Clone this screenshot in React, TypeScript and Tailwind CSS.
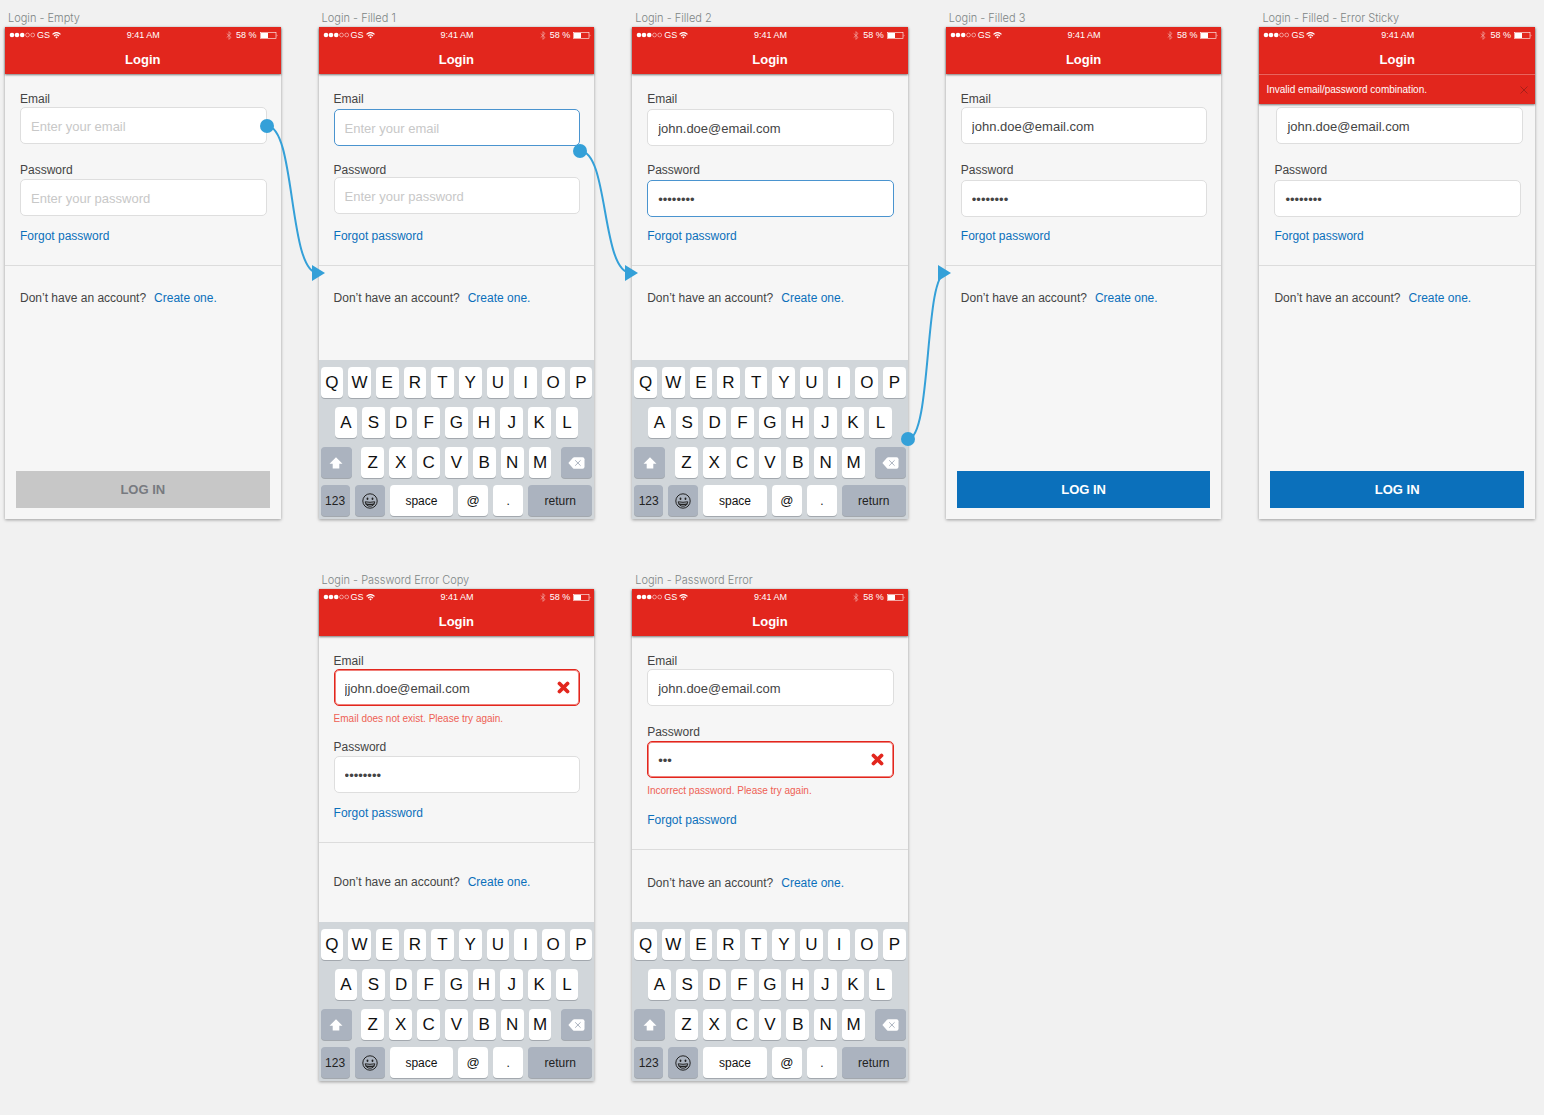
import React, { useId } from "react";

type FieldProps = {
  label: string;
  type: "email" | "password";
  value?: string;
  placeholder?: string;
  state?: "idle" | "focus" | "error";
  error?: string;
  className?: string;
  inputClassName?: string;
};

const borders = {
  idle: "border border-[#dedede]",
  focus: "border border-[#4a94cf]",
  error: "border border-[#e2261d] ring-1 ring-inset ring-[#f0807a]",
};

function Field({ label, type, value, placeholder, state = "idle", error, className = "", inputClassName = "mt-0" }: FieldProps) {
  const id = useId();
  return (
    <div className={`flex flex-col ${className}`}>
      <label htmlFor={id} className="text-[12px] leading-4 text-[#444]">
        {label}
      </label>
      <div className={`relative ${inputClassName}`}>
        <input
          id={id}
          type={type}
          defaultValue={value}
          placeholder={placeholder}
          className={`block h-[37px] w-full rounded-[5px] bg-white px-2.5 pt-0.5 text-[13px] text-[#444] outline-none placeholder:text-[#c8c8c8] ${borders[state]}`}
        />
        {state === "error" && (
          <svg className="absolute right-2.5 top-3 size-[13px]" viewBox="0 0 13 13" aria-hidden="true">
            <path d="M2.5 2.5 L10.5 10.5 M10.5 2.5 L2.5 10.5" stroke="#e2261d" strokeWidth="3.8" strokeLinecap="round" />
          </svg>
        )}
      </div>
      {error && <p className="mt-[5px] text-[10px] leading-4 text-[#ee5f54]">{error}</p>}
    </div>
  );
}

function StatusBar() {
  return (
    <div className="grid h-4 grid-cols-3 items-center pl-1 pr-[3px] text-[9px] leading-none text-white">
      <div className="flex items-center">
        <svg width="27" height="6" viewBox="0 0 27 6" aria-hidden="true">
          <circle cx="3" cy="3" r="2.3" fill="#fff" />
          <circle cx="8" cy="3" r="2.3" fill="#fff" />
          <circle cx="13.2" cy="3" r="2.3" fill="#fff" />
          <circle cx="18.5" cy="3" r="1.9" fill="none" stroke="#fff" strokeWidth=".5" />
          <circle cx="23.7" cy="3" r="1.9" fill="none" stroke="#fff" strokeWidth=".5" />
        </svg>
        <span className="ml-px">GS</span>
        <svg className="ml-0.5" width="9" height="7" viewBox="0 0 9 7" fill="none" stroke="#fff" aria-hidden="true">
          <path d="M.5 2.4 Q4.5 -1.2 8.5 2.4" strokeWidth="1.2" />
          <path d="M2 4.1 Q4.5 1.8 7 4.1" strokeWidth="1.1" />
          <path d="M3.2 5 Q4.5 4 5.8 5 L4.5 6.6 Z" fill="#fff" stroke="none" />
        </svg>
      </div>
      <span className="text-center">9:41 AM</span>
      <div className="flex items-center justify-end">
        <svg className="mr-1" width="6" height="9" viewBox="0 0 6 9" fill="none" stroke="#fff" strokeWidth=".6" opacity=".7" aria-hidden="true">
          <path d="M.7 2.5 L5 6.4 L3 8.4 V.6 L5 2.6 L.7 6.5" />
        </svg>
        <span>58 %</span>
        <svg className="ml-[3px]" width="18" height="7" viewBox="0 0 18 7" aria-hidden="true">
          <rect x=".5" y=".5" width="15.5" height="6" fill="none" stroke="#fff" strokeWidth=".6" />
          <rect x="1" y="1" width="7" height="5" fill="#fff" />
          <path d="M16.8 2.2 q1.2 1.3 0 2.6 Z" fill="#fff" />
        </svg>
      </div>
    </div>
  );
}

const keyBase = "flex items-center justify-center rounded-[4px] shadow-[0_1px_0_#a3a8ae]";
const light = `${keyBase} bg-white text-[#111]`;
const dark = `${keyBase} bg-[#abb3bf] text-[#222]`;

function LetterRow({ letters, className }: { letters: string; className: string }) {
  return (
    <div className={`grid h-[31px] gap-[5px] ${className}`}>
      {letters.split("").map((l) => (
        <button key={l} type="button" className={`${light} text-[17px] leading-none`}>
          {l}
        </button>
      ))}
    </div>
  );
}

function Keyboard() {
  return (
    <div className="mt-auto flex flex-col gap-[9px] bg-[#d1d6da] px-0.5 pb-[3px] pt-[7px]">
      <LetterRow letters="QWERTYUIOP" className="grid-cols-10" />
      <LetterRow letters="ASDFGHJKL" className="grid-cols-9 px-[14px]" />
      <div className="flex flex-col gap-[7px]">
        <div className="flex h-[31px] justify-between">
          <button type="button" aria-label="Shift" className={`${dark} w-[31px]`}>
            <svg width="14" height="12" viewBox="0 0 14 12" aria-hidden="true">
              <path d="M7 .3 L13.5 6.7 H10.3 V11.4 H3.7 V6.7 H.5 Z" fill="#fff" />
            </svg>
          </button>
          <LetterRow letters="ZXCVBNM" className="w-[190px] grid-cols-7" />
          <button type="button" aria-label="Delete" className={`${dark} w-[31px]`}>
            <svg width="17" height="12" viewBox="0 0 17 12" aria-hidden="true">
              <path d="M.4 6 L5 .8 Q5.5 .3 6.3 .3 H14.5 Q16.5 .3 16.5 2.2 V9.8 Q16.5 11.7 14.5 11.7 H6.3 Q5.5 11.7 5 11.2 Z" fill="#fff" />
              <path d="M7.2 3.3 L12.6 8.7 M12.6 3.3 L7.2 8.7" stroke="#abb3bf" strokeWidth="1" />
            </svg>
          </button>
        </div>
        <div className="flex h-[31px] gap-[5px] text-[12px]">
          <button type="button" className={`${dark} w-[29px]`}>123</button>
          <button type="button" aria-label="Emoji" className={`${dark} w-[30px]`}>
            <svg width="16" height="16" viewBox="0 0 16 16" fill="none" stroke="#222" aria-hidden="true">
              <circle cx="8" cy="8" r="7.2" strokeWidth="1" />
              <ellipse cx="5.5" cy="5.8" rx=".9" ry="1.2" fill="#222" stroke="none" />
              <ellipse cx="10.5" cy="5.8" rx=".9" ry="1.2" fill="#222" stroke="none" />
              <path d="M3.2 8.8 Q8 9.8 12.8 8.8 Q12.2 13.2 8 13.2 Q3.800 13.2 3.2 8.8 Z" strokeWidth="1" />
              <path d="M3.8 10.800 Q8 12 12.2 10.8" strokeWidth="1.2" />
            </svg>
          </button>
          <button type="button" className={`${light} flex-1`}>space</button>
          <button type="button" className={`${light} w-[30px] text-[13px]`}>@</button>
          <button type="button" className={`${light} w-[30px]`}>.</button>
          <button type="button" className={`${dark} w-16`}>return</button>
        </div>
      </div>
    </div>
  );
}

function LoginButton({ disabled = false }: { disabled?: boolean }) {
  const tone = disabled ? "bg-[#c7c7c7] text-[#777a80]" : "bg-[#0b70bb] text-white";
  return (
    <div className="mt-auto px-[11px] pb-[11px]">
      <button type="submit" disabled={disabled} className={`h-[37px] w-full text-[13px] font-bold ${tone}`}>
        LOG IN
      </button>
    </div>
  );
}

type Flow = { className: string; height: number; dot: [number, number]; path: string; tip: [number, number] };

function Connector({ className, height, dot, path, tip }: Flow) {
  return (
    <svg
      className={`pointer-events-none absolute z-10 ${className}`}
      width="66"
      height={height}
      viewBox={`0 0 66 ${height}`}
      aria-hidden="true"
    >
      <path d={path} fill="none" stroke="#34a0d8" strokeWidth="2" />
      <circle cx={dot[0]} cy={dot[1]} r="7" fill="#34a0d8" />
      <path d={`M${tip[0] - 13} ${tip[1] - 8} L${tip[0]} ${tip[1]} L${tip[0] - 13} ${tip[1] + 8} Z`} fill="#34a0d8" />
    </svg>
  );
}

type ArtboardProps = {
  title: string;
  className?: string;
  banner?: string;
  email: React.ReactNode;
  password: React.ReactNode;
  forgotClassName: string;
  accountClassName?: string;
  footer: React.ReactNode;
  connector?: Flow;
};

function Artboard({
  title,
  className = "",
  banner,
  email,
  password,
  forgotClassName,
  accountClassName = "pt-6",
  footer,
  connector,
}: ArtboardProps) {
  return (
    <section className={`relative flex flex-col ${className}`}>
      <h2 className="pl-[3px] font-[Inter] text-[11px] font-light leading-[18px] text-[#7d8585]">{title}</h2>
      <form
        onSubmit={(e) => e.preventDefault()}
        className="flex min-h-[492px] flex-1 flex-col bg-[#f6f6f6] shadow-[0_1px_3px_rgba(0,0,0,0.35)]"
      >
        <header className="relative h-[47px] bg-[#e2261d] text-white shadow-[0_1px_2px_rgba(0,0,0,0.5)]">
          <StatusBar />
          <h3 className="text-center text-[13px] font-bold leading-[34px]">Login</h3>
          {banner && (
            <div
              role="alert"
              className="absolute inset-x-0 top-full z-10 flex h-[30px] items-center justify-between border-t border-[#e9645d] bg-[#e2261d] px-[7px] text-[10px] shadow-[0_1px_2px_rgba(0,0,0,0.5)]"
            >
              <span>{banner}</span>
              <button type="button" aria-label="Dismiss">
                <svg width="8" height="8" viewBox="0 0 8 8" stroke="#a81f18" strokeWidth="1" aria-hidden="true">
                  <path d="M.5 .5 L7.5 7.5 M7.5 .5 L.5 7.5" />
                </svg>
              </button>
            </div>
          )}
        </header>
        <div className="pl-[15px] pr-[14px] pt-[17px]">
          {email}
          {password}
        </div>
        <div className={`border-b border-[#dcdcdc] px-[15px] pb-[21px] text-[12px] leading-4 ${forgotClassName}`}>
          <a href="#forgot" className="text-[#0b70bb]">Forgot password</a>
        </div>
        <p className={`flex items-baseline gap-2 px-[15px] text-[12px] leading-4 text-[#444] ${accountClassName}`}>
          <span>Don’t have an account?</span>
          <a href="#create" className="text-[#0b70bb]">Create one.</a>
        </p>
        {footer}
      </form>
      {connector && <Connector {...connector} />}
    </section>
  );
}

export default function App() {
  return (
    <main className="min-h-screen bg-[#f1f1f1] pb-[34px] pl-[5px] pr-[9px] pt-[9px] font-['Liberation_Sans',Arial,sans-serif]">
      <div className="grid grid-cols-5 gap-x-[38px] gap-y-[52px]">
        <Artboard
          title="Login - Empty"
          email={<Field label="Email" type="email" placeholder="Enter your email" />}
          password={<Field label="Password" type="password" placeholder="Enter your password" className="mt-[18px]" inputClassName="mt-px" />}
          forgotClassName="mt-3"
          footer={<LoginButton disabled />}
          connector={{
            className: "left-[calc(100%-21px)] top-[109px]",
            height: 164,
            dot: [7, 8],
            path: "M7 8 C36 8 28 155 58 155",
            tip: [65, 155],
          }}
        />
        <Artboard
          title="Login - Filled 1"
          email={<Field label="Email" type="email" placeholder="Enter your email" state="focus" inputClassName="mt-0.5" />}
          password={<Field label="Password" type="password" placeholder="Enter your password" className="mt-4" inputClassName="-mt-px" />}
          forgotClassName="mt-3.5"
          footer={<Keyboard />}
          connector={{
            className: "left-[calc(100%-21px)] top-[134px]",
            height: 139,
            dot: [7, 8],
            path: "M7 8 C36 8 28 130 58 130",
            tip: [65, 130],
          }}
        />
        <Artboard
          title="Login - Filled 2"
          email={<Field label="Email" type="email" value="john.doe@email.com" inputClassName="mt-0.5" />}
          password={<Field label="Password" type="password" value="password" state="focus" className="mt-4" inputClassName="mt-0.5" />}
          forgotClassName="mt-[11px]"
          footer={<Keyboard />}
          connector={{
            className: "left-[calc(100%-8px)] top-[254px]",
            height: 184,
            dot: [8, 176],
            path: "M8 176 C32 176 24 10 46 10",
            tip: [51, 10],
          }}
        />
        <Artboard
          title="Login - Filled 3"
          email={<Field label="Email" type="email" value="john.doe@email.com" />}
          password={<Field label="Password" type="password" value="password" className="mt-[18px]" inputClassName="mt-0.5" />}
          forgotClassName="mt-[11px]"
          footer={<LoginButton />}
        />
        <Artboard
          title="Login - Filled - Error Sticky"
          banner="Invalid email/password combination."
          email={<Field label="Email" type="email" value="john.doe@email.com" className="-mr-0.5 ml-0.5" />}
          password={<Field label="Password" type="password" value="password" className="mt-[18px]" inputClassName="mt-0.5" />}
          forgotClassName="mt-[11px]"
          footer={<LoginButton />}
        />
        <Artboard
          title="Login - Password Error Copy"
          className="col-start-2"
          email={<Field label="Email" type="email" value="jjohn.doe@email.com" state="error" error="Email does not exist. Please try again." />}
          password={<Field label="Password" type="password" value="password" className="mt-3" inputClassName="mt-px" />}
          forgotClassName="mt-3"
          accountClassName="pt-[31px]"
          footer={<Keyboard />}
        />
        <Artboard
          title="Login - Password Error"
          email={<Field label="Email" type="email" value="john.doe@email.com" />}
          password={
            <Field
              label="Password"
              type="password"
              value="pas"
              state="error"
              error="Incorrect password. Please try again."
              className="mt-[18px]"
              inputClassName="mt-px"
            />
          }
          forgotClassName="mt-[13px]"
          accountClassName="pt-[25px]"
          footer={<Keyboard />}
        />
      </div>
    </main>
  );
}
